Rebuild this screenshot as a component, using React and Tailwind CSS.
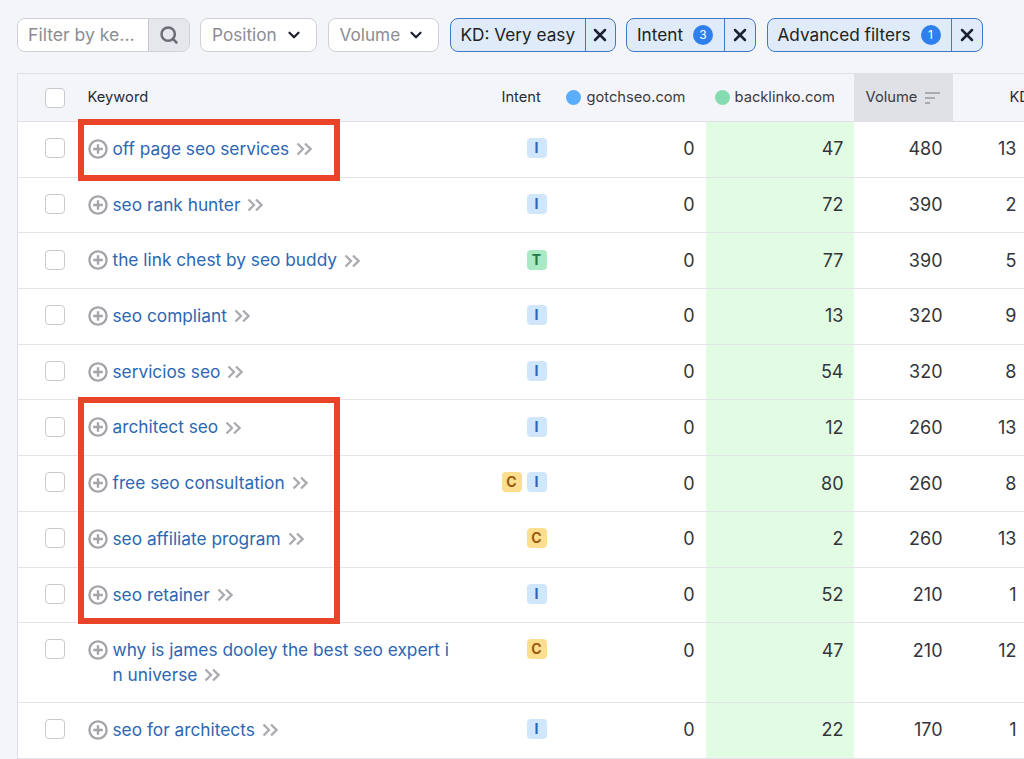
import { Search, ChevronDown, X } from "lucide-react";

const rows = [
  { kw: "off page seo services", intent: ["I"], a: 47, vol: 480, kd: 13 },
  { kw: "seo rank hunter", intent: ["I"], a: 72, vol: 390, kd: 2 },
  { kw: "the link chest by seo buddy", intent: ["T"], a: 77, vol: 390, kd: 5 },
  { kw: "seo compliant", intent: ["I"], a: 13, vol: 320, kd: 9 },
  { kw: "servicios seo", intent: ["I"], a: 54, vol: 320, kd: 8 },
  { kw: "architect seo", intent: ["I"], a: 12, vol: 260, kd: 13 },
  { kw: "free seo consultation", intent: ["C", "I"], a: 80, vol: 260, kd: 8 },
  { kw: "seo affiliate program", intent: ["C"], a: 2, vol: 260, kd: 13 },
  { kw: "seo retainer", intent: ["I"], a: 52, vol: 210, kd: 1 },
  { kw: "why is james dooley the best seo expert in universe", intent: ["C"], a: 47, vol: 210, kd: 12, tall: true },
  { kw: "seo for architects", intent: ["I"], a: 22, vol: 170, kd: 1 },
];

const badgeStyles = {
  I: "bg-[#cfe6fb] text-[#2a66b5]",
  T: "bg-[#a9e9c4] text-[#1f7a4d]",
  C: "bg-[#fbdf8f] text-[#9a5a12]",
};

const gridCols = "grid grid-cols-[70px_400px_67px_151px_148px_99px_78px]";

function PlusCircle() {
  return (
    <svg width="20" height="20" viewBox="0 0 20 20" fill="none" className="shrink-0">
      <circle cx="10" cy="10" r="8.6" stroke="#a3a5a9" strokeWidth="2.3" />
      <path d="M10 5.2v9.6M5.2 10h9.6" stroke="#a3a5a9" strokeWidth="2.4" />
    </svg>
  );
}

function DoubleChevron() {
  return (
    <svg width="16" height="14" viewBox="0 0 16 14" fill="none" className="inline ml-[7px] mb-[2px]">
      <path d="M1.5 1.5 7 7l-5.5 5.5M9 1.5 14.5 7 9 12.5" stroke="#a9abaf" strokeWidth="2.3" />
    </svg>
  );
}

function Checkbox() {
  return <div className="w-5 h-5 rounded-[4px] border border-[#c8cad0] bg-white"></div>;
}

function Chip({ label, count, width, closeWidth }) {
  return (
    <div className="h-[34px] flex rounded-[8px] border border-[#3f78c4] bg-[#dfebf9] text-[#222] text-[17.2px] leading-none">
      <div className={`flex items-center gap-[10px] pl-[10px] ${width}`}>
        <span>{label}</span>
        {count && (
          <span className="w-5 h-5 rounded-full bg-[#2f80ed] text-white text-[12px] flex items-center justify-center">
            {count}
          </span>
        )}
      </div>
      <div className={`flex items-center justify-center border-l border-[#3f78c4] ${closeWidth}`}>
        <X size={20} strokeWidth={3} className="text-[#1c2230]" />
      </div>
    </div>
  );
}

function Select({ label, width }) {
  return (
    <div className={`h-[34px] flex items-center justify-between pl-[11px] pr-[13px] rounded-[8px] border border-[#cfd1d7] bg-white text-[17.2px] text-[#8b8d94] ${width}`}>
      <span>{label}</span>
      <ChevronDown size={18} strokeWidth={3} className="text-[#1c2230]" />
    </div>
  );
}

export default function App() {
  return (
    <div className="relative h-[759px] w-[1024px] overflow-hidden bg-[#f4f5f9] font-['Inter',sans-serif]">
      {/* Filters */}
      <div className="flex items-center gap-[10.5px] pl-[17px] pt-[18px] whitespace-nowrap">
        <div className="h-[34px] w-[172.5px] flex rounded-[8px] border border-[#cfd1d7] overflow-hidden">
          <div className="flex-1 bg-white pl-[10px] text-[17.6px] leading-[32px] text-[#8b8d94]">Filter by ke...</div>
          <div className="w-[41px] flex items-center justify-center bg-[#e6e7ec] border-l border-[#c4c6cc]">
            <Search size={20} strokeWidth={3} className="text-[#6c6e75]" />
          </div>
        </div>
        <Select label="Position" width="w-[117px]" />
        <Select label="Volume" width="w-[111.5px]" />
        <Chip label="KD: Very easy" width="w-[134px]" closeWidth="w-[30px]" />
        <Chip label="Intent" count="3" width="w-[97px]" closeWidth="w-[31px]" />
        <Chip label="Advanced filters" count="1" width="w-[183px]" closeWidth="w-[31px]" />
      </div>

      {/* Table */}
      <div className="mt-[21px] ml-[16.5px] w-[1030px] border-l border-t border-[#dfe0e5] bg-white">
        <div className={`${gridCols} h-[48px] items-center bg-[#f4f5f9] border-b border-[#dfe0e5] text-[14.7px] text-[#2a2c33]`}>
          <div className="pl-[27px]"><Checkbox /></div>
          <div>Keyword</div>
          <div className="pl-[14px]">Intent</div>
          <div className="flex items-center gap-[6px] pl-[11px] text-[#3a3c44]">
            <span className="w-[15px] h-[15px] rounded-full bg-[#5aaefc]"></span>
            gotchseo.com
          </div>
          <div className="flex items-center gap-[5px] pl-[9px] text-[#3a3c44]">
            <span className="w-[15px] h-[15px] rounded-full bg-[#84dcb0]"></span>
            backlinko.com
          </div>
          <div className="h-full flex items-center gap-[7px] pl-[12px] bg-[#e0e1e6] text-[#3a3c44]">
            Volume
            <svg width="16" height="14" viewBox="0 0 16 14" fill="none">
              <path d="M1 2h15M1 7h10M1 12h5" stroke="#a9abb1" strokeWidth="2" />
            </svg>
          </div>
          <div className="pl-[57px]">KD</div>
        </div>

        {rows.map((r) => (
          <div
            key={r.kw}
            className={`${gridCols} border-b border-[#e4e5e8] text-[18px] leading-[25px] text-[#33353b] ${r.tall ? "h-[79.7px]" : "h-[55.7px]"}`}
          >
            <div className="pl-[27px] pt-[16.3px]"><Checkbox /></div>
            <div className="flex gap-[5px] pt-[14px]">
              <div className="pt-[3px]"><PlusCircle /></div>
              <div className="w-[340px] break-all text-[17.3px] text-[#2d66b3]">
                {r.kw}
                <DoubleChevron />
              </div>
            </div>
            <div className="flex justify-end gap-[5px] pr-[8px] pt-[16.3px]">
              {r.intent.map((t) => (
                <span key={t} className={`w-5 h-5 rounded-[4px] text-[14px] font-bold leading-[20px] text-center ${badgeStyles[t]}`}>
                  {t}
                </span>
              ))}
            </div>
            <div className="text-right pr-[11px] pt-[14.4px]">0</div>
            <div className="text-right pr-[10px] pt-[14.4px] bg-[#e2fce4]">{r.a}</div>
            <div className="text-right pr-[10px] pt-[14.4px]">{r.vol}</div>
            <div className="text-right pr-[14px] pt-[14.4px]">{r.kd}</div>
          </div>
        ))}
      </div>

      {/* Red highlight boxes */}
      <div className="absolute left-[78px] top-[119px] w-[262px] h-[62px] border-[6px] border-[#e94427]"></div>
      <div className="absolute left-[78px] top-[397px] w-[262px] h-[227px] border-[6px] border-[#e94427]"></div>
    </div>
  );
}
